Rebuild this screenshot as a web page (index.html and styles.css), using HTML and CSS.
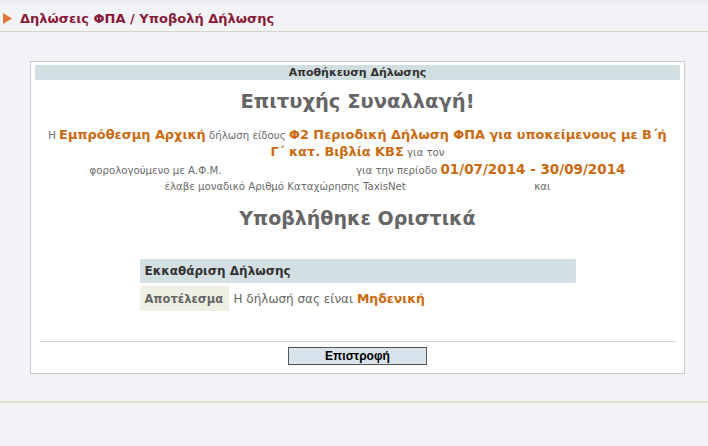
FILE: index.html
```html
<!DOCTYPE html>
<html lang="el">
<head>
<meta charset="utf-8">
<title>Υποβολή Δήλωσης</title>
<link rel="stylesheet" href="styles.css">
</head>
<body>
<div class="topband"></div>
<div class="crumb">
  <svg class="crumb-arrow" width="9" height="11" viewBox="0 0 9 11"><polygon points="0,0 9,5.5 0,11" fill="#e0773a"/></svg>
  <span class="crumb-text">Δηλώσεις ΦΠΑ / Υποβολή Δήλωσης</span>
</div>
<div class="crumb-rule"></div>
<div class="content">
  <div class="panel">
    <div class="panel-head">Αποθήκευση Δήλωσης</div>
    <h1 class="title">Επιτυχής Συναλλαγή!</h1>
    <div class="message">
      <p class="line">Η <b class="hl">Εμπρόθεσμη Αρχική</b> δήλωση είδους <b class="hl">Φ2 Περιοδική Δήλωση ΦΠΑ για υποκείμενους με Β΄ή</b></p>
      <p class="line"><b class="hl">Γ΄ κατ. Βιβλία ΚΒΣ</b> για τον</p>
      <p class="line">φορολογούμενο με Α.Φ.Μ. <span class="blank blank-afm"></span> για την περίοδο <b class="hl date">01/07/2014 - 30/09/2014</b></p>
      <p class="line">έλαβε μοναδικό Αριθμό Καταχώρησης TaxisNet <span class="blank blank-num"></span> και</p>
    </div>
    <h2 class="title title2">Υποβλήθηκε Οριστικά</h2>
    <table class="settle">
      <tr><th colspan="2" class="settle-head">Εκκαθάριση Δήλωσης</th></tr>
      <tr><td class="settle-label">Αποτέλεσμα</td><td class="settle-value">Η δήλωσή σας είναι <b class="hl">Μηδενική</b></td></tr>
    </table>
    <div class="rule"></div>
    <div class="actions"><button class="btn" type="button">Επιστροφή</button></div>
  </div>
</div>
<div class="footer-rule"></div>
</body>
</html>
```
FILE: styles.css
```css
html, body {
  margin: 0;
  padding: 0;
}
body {
  background: #f2f3f6;
  font-family: "DejaVu Sans", Verdana, sans-serif;
  color: #666;
  width: 708px;
  height: 446px;
  overflow: hidden;
}
.topband {
  height: 5px;
  background: #eceef2;
}
.crumb {
  display: flex;
  align-items: center;
  height: 26px;
  padding-left: 3px;
  gap: 8px;
}
.crumb-arrow {
  display: block;
}
.crumb-text {
  font-size: 13px;
  font-weight: bold;
  color: #8a1a3a;
}
.crumb-rule {
  height: 1px;
  background: #d8d4c8;
  border-bottom: 1px solid #f8f7f2;
}
.content {
  padding: 28px 23px 0 30px;
}
.panel {
  background: #fff;
  border: 1px solid #c9cbcd;
  padding: 3px 4px 8px;
}
.panel-head {
  background: #d2dfe2;
  height: 15px;
  line-height: 15px;
  text-align: center;
  font-size: 11px;
  font-weight: bold;
  color: #333;
}
.title {
  margin: 10px 0 0;
  text-align: center;
  font-size: 19.5px;
  line-height: 24px;
  font-weight: bold;
  color: #666;
}
.message {
  margin-top: 13px;
  text-align: center;
  font-size: 10.2px;
  color: #6a6a6a;
}
.line {
  margin: 0;
  line-height: 16px;
}
.hl {
  color: #cc6a10;
  font-weight: bold;
  font-size: 12.9px;
}
.date {
  font-size: 13.5px;
}
.blank {
  display: inline-block;
  height: 10px;
}
.blank-afm {
  width: 128px;
}
.blank-num {
  width: 122px;
}
.title2 {
  margin-top: 11px;
  font-size: 19px;
}
.settle {
  margin: 26px auto 0;
  width: 436px;
  border-collapse: separate;
  border-spacing: 0 3px;
  font-size: 12px;
}
.settle-head {
  background: #d3dfe3;
  height: 24px;
  padding: 0 5px;
  text-align: left;
  font-size: 12px;
  color: #333;
}
.settle-label {
  width: 79px;
  background: #eef0e4;
  height: 25px;
  padding: 0 5px;
  font-weight: bold;
  font-size: 11.5px;
  color: #666;
}
.settle-value {
  padding: 0 5px;
  font-size: 12px;
}
.settle-value .hl {
  font-size: 12.5px;
}
.rule {
  margin: 27px 5px 0;
  height: 1px;
  background: #cfcfcf;
}
.actions {
  display: flex;
  justify-content: center;
  margin-top: 5px;
}
.btn {
  width: 139px;
  height: 18px;
  padding: 0;
  margin: 0;
  background: #d8e4ec;
  border: 1px solid #555;
  font-family: "Liberation Sans", Arial, sans-serif;
  font-weight: bold;
  font-size: 12px;
  color: #000;
}
.footer-rule {
  margin-top: 27px;
  height: 2px;
  background: #e3ddd0;
  border-bottom: 2px solid #f6f4ee;
}
```
